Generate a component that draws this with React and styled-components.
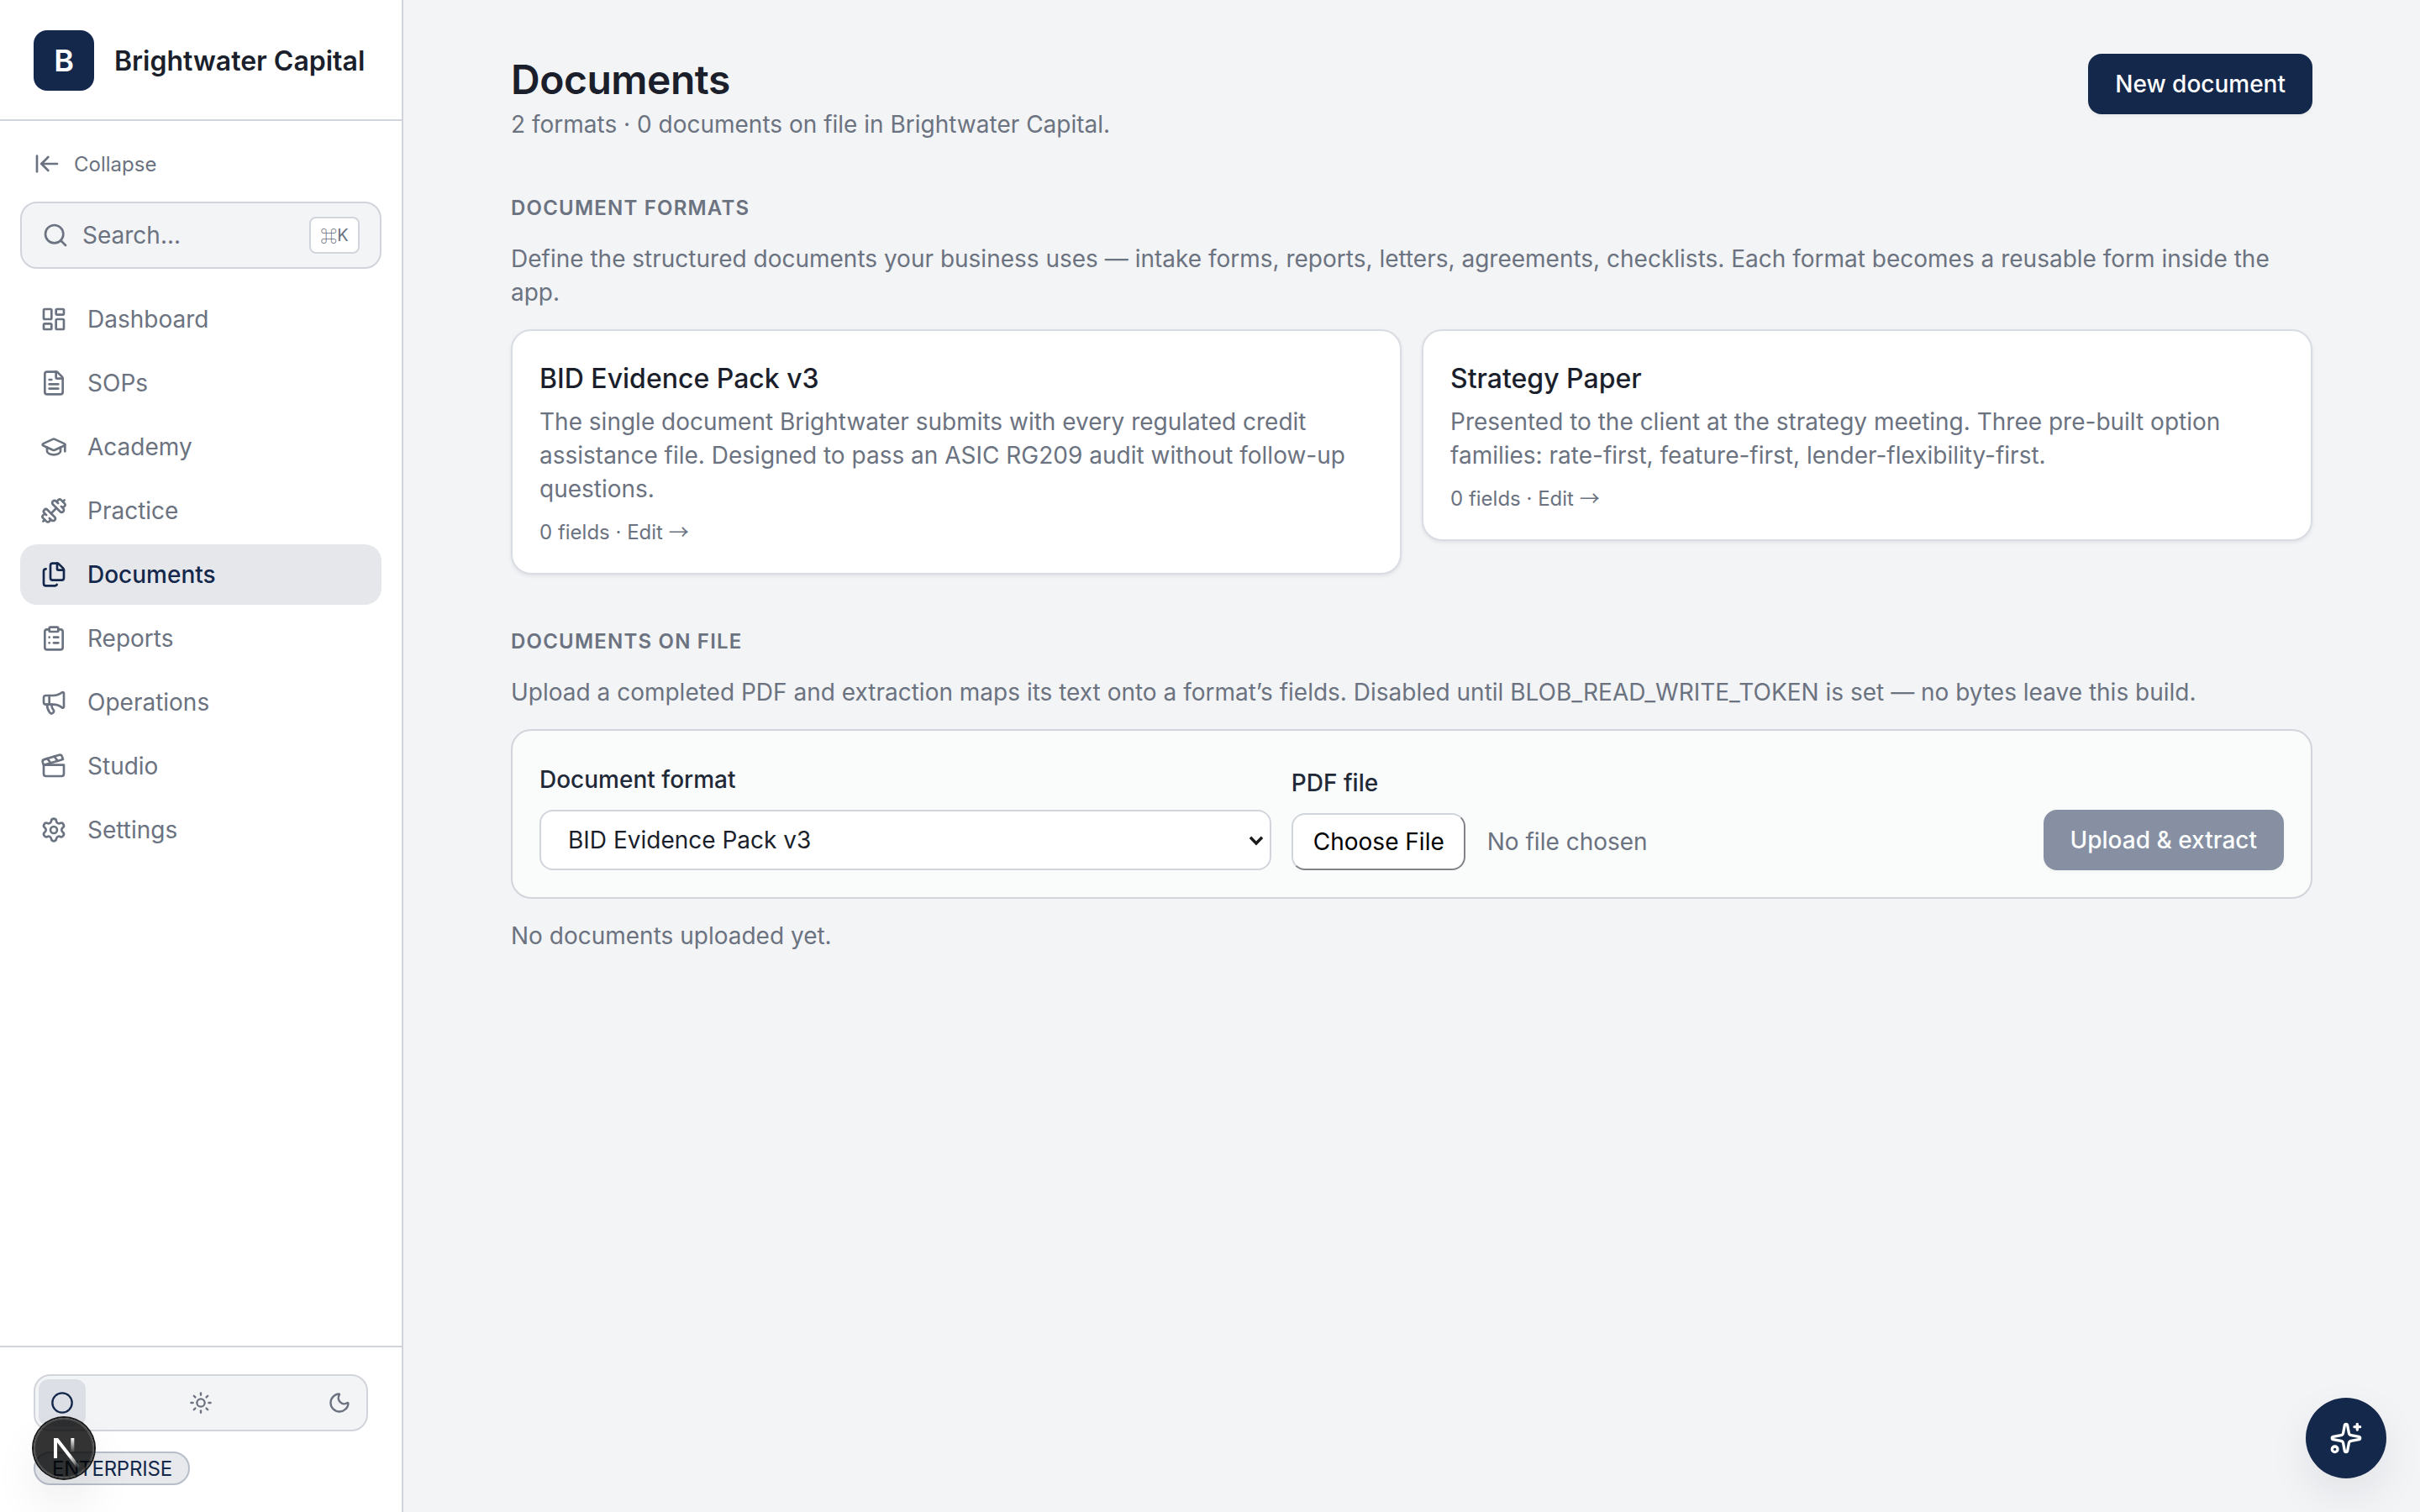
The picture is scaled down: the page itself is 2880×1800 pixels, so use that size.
import React from "react";
import styled, { createGlobalStyle } from "styled-components";
import {
  ArrowLeftToLine, Search, LayoutDashboard, FileText, GraduationCap, Dumbbell, Files,
  ClipboardList, Megaphone, Clapperboard, Settings, Circle, Sun, Moon, Sparkles,
} from "lucide-react";

const Global = createGlobalStyle`
  * { box-sizing: border-box; }
  html, body { margin: 0; padding: 0; background: #f3f4f6; }
  #root { zoom: 2; width: 1440px; height: 900px; overflow: hidden; }
  body { font-family: Inter, "Liberation Sans", sans-serif; color: #1f2937; }
`;

const Shell = styled.div`
  display: flex;
  width: 1440px;
  height: 900px;
`;
const Sidebar = styled.aside`
  width: 240px;
  flex: none;
  display: flex;
  flex-direction: column;
  background: #fff;
  border-right: 1px solid #d1d5db;
`;
const Brand = styled.div`
  height: 72px;
  display: flex;
  align-items: center;
  gap: 12px;
  padding: 1px 20px 0;
  border-bottom: 1px solid #d1d5db;
`;
const Logo = styled.div`
  width: 36px;
  height: 36px;
  border-radius: 8px;
  background: #14284b;
  color: #fff;
  display: flex;
  align-items: center;
  justify-content: center;
  font-size: 18px;
  font-weight: 600;
`;
const BrandName = styled.div`
  font-size: 16px;
  font-weight: 600;
  color: #1a1f2b;
  white-space: nowrap;
`;
const NavArea = styled.div`
  flex: 1;
  display: flex;
  flex-direction: column;
  padding: 13px 12px 0;
`;
const Collapse = styled.div`
  display: flex;
  align-items: center;
  gap: 8px;
  height: 25px;
  padding-left: 8px;
  font-size: 12px;
  color: #6b7280;
  margin-bottom: 10px;
`;
const SearchBox = styled.div`
  height: 40px;
  display: flex;
  align-items: center;
  gap: 8px;
  padding: 0 12px;
  border: 1px solid #d1d5db;
  border-radius: 10px;
  background: #f3f4f6;
  color: #6b7280;
  font-size: 14px;
  margin-bottom: 12px;
`;
const SearchLabel = styled.span`
  flex: 1;
`;
const Kbd = styled.kbd`
  width: 30px;
  height: 22px;
  display: flex;
  align-items: center;
  justify-content: center;
  border: 1px solid #d1d5db;
  border-radius: 4px;
  background: #fff;
  font-family: Inter, sans-serif;
  font-size: 10px;
  color: #6b7280;
`;
const CmdGlyph = styled.span`
  font-family: "Noto Sans CJK SC", "DejaVu Sans", sans-serif;
`;
const NavList = styled.nav`
  display: flex;
  flex-direction: column;
  gap: 2px;
`;
const NavItem = styled.a`
  height: 36px;
  display: flex;
  align-items: center;
  gap: 12px;
  padding: 0 12px;
  border-radius: 10px;
  font-size: 14px;
  font-weight: ${(p) => (p.$active ? 500 : 400)};
  color: ${(p) => (p.$active ? "#14284b" : "#6b7280")};
  background: ${(p) => (p.$active ? "#e5e7eb" : "transparent")};
`;
const Footer = styled.div`
  border-top: 1px solid #d1d5db;
  padding: 16px 20px 16px;
  display: flex;
  flex-direction: column;
  align-items: flex-start;
  gap: 12px;
`;
const ThemeSwitch = styled.div`
  width: 199px;
  height: 34px;
  display: flex;
  align-items: center;
  justify-content: space-between;
  padding: 2px;
  border: 1px solid #d1d5db;
  border-radius: 10px;
  background: #f3f4f6;
`;
const ThemeButton = styled.span`
  width: 28px;
  height: 28px;
  display: flex;
  align-items: center;
  justify-content: center;
  border-radius: 6px;
  color: ${(p) => (p.$active ? "#14284b" : "#6b7280")};
  background: ${(p) => (p.$active ? "#dcdfe5" : "transparent")};
`;
const PlanBadge = styled.span`
  height: 20px;
  display: inline-flex;
  align-items: center;
  padding: 0 9.5px 0 10px;
  border: 1px solid #b8bec9;
  border-radius: 999px;
  background: #e7e9ed;
  color: #14284b;
  font-size: 12px;
  letter-spacing: -0.1px;
`;
const DevBadge = styled.div`
  position: fixed;
  left: 20px;
  bottom: 20px;
  width: 36px;
  height: 36px;
  border-radius: 50%;
  background: rgba(0, 0, 0, 0.8);
  box-shadow: 0 0 0 1px #171717, inset 0 0 0 1px rgba(255, 255, 255, 0.14), 0 16px 32px -8px rgba(0, 0, 0, 0.24);
  display: flex;
  align-items: center;
  justify-content: center;
`;
const Main = styled.main`
  flex: 1;
  min-width: 0;
  padding: 0 64px;
  background: #f3f4f6;
`;
const PageHead = styled.header`
  display: flex;
  justify-content: space-between;
  align-items: flex-start;
  padding-top: 32px;
  margin-bottom: 30px;
`;
const HeadText = styled.div`
  display: flex;
  flex-direction: column;
`;
const Title = styled.h1`
  margin: 0;
  font-size: 24px;
  line-height: 31px;
  font-weight: 600;
  letter-spacing: -0.24px;
  color: #1a1f2b;
`;
const Subtitle = styled.p`
  margin: 1px 0 0;
  font-size: 14px;
  line-height: 20px;
  color: #6b7280;
`;
const PrimaryButton = styled.button`
  height: 36px;
  padding: 0 16px;
  border: 0;
  border-radius: 8px;
  background: #14284b;
  color: #fff;
  font: 500 14px Inter, sans-serif;
  opacity: ${(p) => (p.disabled ? 0.5 : 1)};
  box-shadow: 0 1px 2px rgba(0, 0, 0, 0.05);
  flex: none;
`;
const SectionTitle = styled.h2`
  margin: 0 0 10px;
  font-size: 12px;
  line-height: 20px;
  letter-spacing: 0.6px;
  font-weight: 600;
  color: #6b7280;
  text-transform: uppercase;
`;
const Lead = styled.p`
  margin: 0 0 12px;
  font-size: 14px;
  line-height: 20px;
  color: #6b7280;
`;
const CardGrid = styled.div`
  display: grid;
  grid-template-columns: 1fr 1fr;
  gap: 12px;
  align-items: start;
  margin-bottom: 30px;
`;
const Card = styled.article`
  background: #fff;
  border: 1px solid #d9dce2;
  border-radius: 12px;
  padding: 16px;
  box-shadow: 0 1px 2px rgba(17, 24, 39, 0.08);
`;
const CardTitle = styled.h3`
  margin: 0 0 3px;
  font-size: 16px;
  line-height: 25px;
  font-weight: 500;
  color: #1a1f2b;
`;
const CardText = styled.p`
  margin: 0;
  font-size: 14px;
  line-height: 20px;
  color: #6b7280;
`;
const CardMeta = styled.div`
  margin-top: 8px;
  font-size: 12px;
  line-height: 16px;
  color: #6b7280;
`;
const Arrow = styled.span`
  font-family: "Noto Sans CJK SC", sans-serif;
  line-height: 1;
`;
const UploadPanel = styled.form`
  display: flex;
  align-items: flex-end;
  gap: 12px;
  padding: 19px 16px 16px;
  border: 1px solid #d1d5db;
  border-radius: 12px;
  background: #fafbfb;
`;
const Field = styled.label`
  flex: 1;
  min-width: 0;
  display: flex;
  flex-direction: column;
  gap: 8px;
  font-size: 14px;
  line-height: 20px;
  font-weight: 500;
  color: #1f2937;
`;
const SelectWrap = styled.div`
  position: relative;
  height: 36px;
`;
const Select = styled.select`
  appearance: none;
  width: 100%;
  height: 36px;
  padding: 0 28px 0 16px;
  border: 1px solid #d1d5db;
  border-radius: 8px;
  background: #fff;
  font: 400 14px Inter, sans-serif;
  color: #1a1f2b;
`;
const Chevron = styled.svg`
  position: absolute;
  right: 4.5px;
  top: 15px;
  width: 9px;
  height: 7px;
  pointer-events: none;
`;
const FileInput = styled.input`
  font: 400 14px Inter, sans-serif;
  color: #6b7280;
  height: 34px;
  &::file-selector-button {
    height: 34px;
    padding: 0 11.5px 0 12px;
    margin-right: 13px;
    border: 1px outset #d1d5db;
    border-radius: 8px;
    background: #fff;
    color: #000;
    font: inherit;
  }
`;
const Empty = styled.p`
  margin: 12px 0 0;
  font-size: 14px;
  line-height: 20px;
  color: #6b7280;
`;
const AssistantFab = styled.button`
  position: fixed;
  right: 20px;
  bottom: 20px;
  width: 48px;
  height: 48px;
  border: 0;
  border-radius: 50%;
  background: #14284b;
  color: #fff;
  display: flex;
  align-items: center;
  justify-content: center;
  box-shadow: 0 10px 25px rgba(17, 24, 39, 0.08);
`;

const nav = [
  ["Dashboard", LayoutDashboard],
  ["SOPs", FileText],
  ["Academy", GraduationCap],
  ["Practice", Dumbbell],
  ["Documents", Files, true],
  ["Reports", ClipboardList],
  ["Operations", Megaphone],
  ["Studio", Clapperboard],
  ["Settings", Settings],
];

function NextMark() {
  return (
    <svg width="30" height="30" viewBox="0 0 180 180" fill="none">
      <defs>
        <linearGradient id="nA" x1="109" y1="116.5" x2="144.5" y2="160.5" gradientUnits="userSpaceOnUse">
          <stop stopColor="#fff" />
          <stop offset="1" stopColor="#fff" stopOpacity="0" />
        </linearGradient>
        <linearGradient id="nB" x1="121" y1="54" x2="120.8" y2="106.9" gradientUnits="userSpaceOnUse">
          <stop stopColor="#fff" />
          <stop offset="1" stopColor="#fff" stopOpacity="0" />
        </linearGradient>
      </defs>
      <path d="M149.508 157.52L69.142 54H54V125.97H66.1136V69.3836L139.999 164.845C143.333 162.614 146.509 160.165 149.508 157.52Z" fill="url(#nA)" />
      <rect x="115" y="54" width="12" height="72" fill="url(#nB)" />
    </svg>
  );
}

const Meta = () => (
  <CardMeta>0 fields · Edit <Arrow>→</Arrow></CardMeta>
);

export default function App() {
  return (
    <>
      <Global />
      <Shell>
        <Sidebar>
          <Brand>
            <Logo>B</Logo>
            <BrandName>Brightwater Capital</BrandName>
          </Brand>
          <NavArea>
            <Collapse>
              <ArrowLeftToLine size={16} />
              Collapse
            </Collapse>
            <SearchBox>
              <Search size={16} />
              <SearchLabel>Search...</SearchLabel>
              <Kbd><CmdGlyph>⌘</CmdGlyph>K</Kbd>
            </SearchBox>
            <NavList>
              {nav.map(([label, Icon, active]) => (
                <NavItem key={label} $active={active}>
                  <Icon size={16} />
                  {label}
                </NavItem>
              ))}
            </NavList>
          </NavArea>
          <Footer>
            <ThemeSwitch>
              <ThemeButton $active><Circle size={14} /></ThemeButton>
              <ThemeButton><Sun size={14} /></ThemeButton>
              <ThemeButton><Moon size={14} /></ThemeButton>
            </ThemeSwitch>
            <PlanBadge>ENTERPRISE</PlanBadge>
          </Footer>
        </Sidebar>
        <Main>
          <PageHead>
            <HeadText>
              <Title>Documents</Title>
              <Subtitle>2 formats · 0 documents on file in Brightwater Capital.</Subtitle>
            </HeadText>
            <PrimaryButton type="button">New document</PrimaryButton>
          </PageHead>
          <SectionTitle>Document formats</SectionTitle>
          <Lead>Define the structured documents your business uses — intake forms, reports, letters, agreements, checklists. Each format becomes a reusable form inside the app.</Lead>
          <CardGrid>
            <Card>
              <CardTitle>BID Evidence Pack v3</CardTitle>
              <CardText>The single document Brightwater submits with every regulated credit assistance file. Designed to pass an ASIC RG209 audit without follow-up questions.</CardText>
              <Meta />
            </Card>
            <Card>
              <CardTitle>Strategy Paper</CardTitle>
              <CardText>Presented to the client at the strategy meeting. Three pre-built option families: rate-first, feature-first, lender-flexibility-first.</CardText>
              <Meta />
            </Card>
          </CardGrid>
          <SectionTitle>Documents on file</SectionTitle>
          <Lead>Upload a completed PDF and extraction maps its text onto a format’s fields. Disabled until BLOB_READ_WRITE_TOKEN is set — no bytes leave this build.</Lead>
          <UploadPanel>
            <Field>
              Document format
              <SelectWrap>
                <Select defaultValue="bid">
                  <option value="bid">BID Evidence Pack v3</option>
                  <option value="strategy">Strategy Paper</option>
                </Select>
                <Chevron viewBox="0 0 9 7" fill="none">
                  <path d="M1 1.4L4.5 5L8 1.4" stroke="#1a1a1a" strokeWidth="1.7" />
                </Chevron>
              </SelectWrap>
            </Field>
            <Field>
              PDF file
              <FileInput type="file" />
            </Field>
            <PrimaryButton type="button" disabled>Upload &amp; extract</PrimaryButton>
          </UploadPanel>
          <Empty>No documents uploaded yet.</Empty>
        </Main>
      </Shell>
      <DevBadge><NextMark /></DevBadge>
      <AssistantFab type="button"><Sparkles size={20} /></AssistantFab>
    </>
  );
}
